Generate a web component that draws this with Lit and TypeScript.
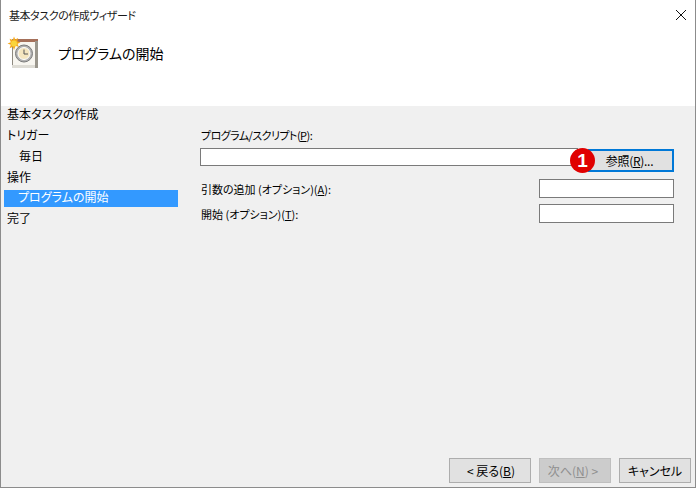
import { LitElement, html, css } from "lit";
import { customElement } from "lit/decorators.js";

@customElement("app-root")
export class AppRoot extends LitElement {
  static styles = css`
    :host {
      display: block;
      width: 696px;
      height: 488px;
      font-family: "Noto Sans CJK JP", "Noto Sans", sans-serif;
      font-size: 12px;
      font-feature-settings: "palt";
      color: #000;
    }
    .win {
      box-sizing: border-box;
      width: 696px;
      height: 488px;
      display: flex;
      flex-direction: column;
      background: #f0f0f0;
      border: 1px solid #8c8c8c;
      border-top: none;
      overflow: hidden;
    }
    .head {
      height: 106px;
      background: #fff;
      flex: none;
      display: flex;
      flex-direction: column;
    }
    .titlebar {
      height: 30px;
      display: flex;
      align-items: center;
      justify-content: space-between;
      padding: 0 9px 0 8px;
      color: #1a1a1a;
      line-height: 30px;
      font-size: 11px;
      letter-spacing: -0.45px;
    }
    .close { display: block; }
    .heading {
      display: flex;
      align-items: flex-start;
      gap: 17px;
      padding: 6px 0 0 6px;
    }
    .heading svg { display: block; flex: none; }
    .heading span {
      font-size: 14px;
      line-height: 24px;
      margin-top: 5px;
    }
    .main {
      flex: 1;
      display: flex;
      min-height: 0;
    }
    .side {
      width: 177px;
      flex: none;
      padding: 0 0 0 3px;
      margin-top: -2px;
      box-sizing: border-box;
    }
    .side-row {
      height: 21px;
      line-height: 19px;
      padding-left: 3px;
    }
    .side-row.sub { padding-left: 15px; }
    .side-row.cur {
      height: 17px;
      line-height: 14px;
      margin: 2px 0 1px;
      padding-left: 14px;
      background: #3399ff;
      color: #fff;
    }
    .form {
      width: 474px;
      margin-left: 22px;
      padding-top: 21px;
      box-sizing: border-box;
      position: relative;
    }
    .lbl {
      font-size: 11px;
      line-height: 16px;
      padding-left: 1px;
      height: 21px;
    }
    .lbl.tight { letter-spacing: -0.55px; }
    .prog {
      display: flex;
      align-items: flex-start;
      justify-content: space-between;
    }
    .field {
      box-sizing: border-box;
      background: #fff;
      border: 1px solid #7a7a7a;
    }
    .prog .field { width: 378px; height: 18px; }
    .browse {
      box-sizing: border-box;
      width: 86px;
      height: 23px;
      margin-top: 1px;
      background: #e1e1e1;
      border: 2px solid #0078d7;
      font: inherit;
      font-size: 12px;
      letter-spacing: -0.3px;
      line-height: 17px;
      padding: 0 3px 0 0;
      text-align: center;
      color: #000;
    }
    u { text-underline-offset: 1px; }
    .opt {
      display: flex;
      justify-content: space-between;
      align-items: center;
      height: 19px;
      margin-bottom: 6px;
    }
    .opts { padding-top: 7px; }
    .opt .field { width: 135px; height: 19px; }
    .opt .lbl { height: 16px; }
    .badge {
      position: absolute;
      left: 370px;
      top: 42px;
      width: 25px;
      height: 25px;
      border-radius: 50%;
      background: #e00000;
      color: #fff;
      font-family: "Liberation Sans", sans-serif;
      font-weight: 700;
      font-size: 19px;
      line-height: 25px;
      text-align: center;
    }
    .foot {
      flex: none;
      display: flex;
      justify-content: flex-end;
      gap: 8px;
      padding: 0 4px 4px 0;
      height: 25px;
    }
    .btn {
      box-sizing: border-box;
      width: 72px;
      height: 25px;
      background: #e1e1e1;
      border: 1px solid #adadad;
      font: inherit;
      font-size: 12px;
      line-height: 21px;
      padding: 0;
      text-align: center;
      color: #000;
    }
    .btn.back { width: 82px; padding-left: 2px; }
    .btn.off {
      background: #cccccc;
      border-color: #bfbfbf;
      color: #8f8f8f;
      padding-right: 4px;
    }
  `;

  render() {
    return html`
      <div class="win">
        <div class="head">
          <div class="titlebar">
            <span>基本タスクの作成ウィザード</span>
            <svg class="close" width="10" height="10" viewBox="0 0 10 10">
              <path d="M0 0L10 10M10 0L0 10" stroke="#111" stroke-width="1" fill="none" />
            </svg>
          </div>
          <div class="heading">
            <svg width="34" height="34" viewBox="0 0 34 34">
              <rect x="5" y="3" width="26" height="29" fill="#8f8a80" />
              <rect x="6" y="6" width="22" height="24" fill="#f8f6f0" />
              <rect x="5" y="29" width="24" height="3" fill="#dedcd5" />
              <rect x="8" y="3" width="23" height="3" fill="#a5705a" />
              <rect x="28" y="5" width="3" height="27" fill="#9a968c" />
              <circle cx="17" cy="17.500" r="8.500" fill="#b0b0b0" stroke="#7b7b7b" stroke-width="1" />
              <circle cx="17" cy="17.500" r="6" fill="#f5e6c0" stroke="#fff" stroke-width="1" />
              <path d="M17 13.500V18H21" fill="none" stroke="#555" stroke-width="1" />
              <path d="M7 0.500l1.200 3 3-1.500-1 3.200 3.300 1.300-3 1.300 1.300 3.200-3.200-1.300L7 14l-1.200-3.300-3.200 1.500 1.200-3.400L0.500 7.500l3.300-1.200L2.600 2.800l3.200 1.300z" fill="#f5a81c" />
              <circle cx="7" cy="7.500" r="3" fill="#fad53c" />
            </svg>
            <span>プログラムの開始</span>
          </div>
        </div>
        <div class="main">
          <div class="side">
            <div class="side-row">基本タスクの作成</div>
            <div class="side-row">トリガー</div>
            <div class="side-row sub">毎日</div>
            <div class="side-row">操作</div>
            <div class="side-row sub cur">プログラムの開始</div>
            <div class="side-row">完了</div>
          </div>
          <div class="form">
            <div class="lbl tight">プログラム/スクリプト(<u>P</u>):</div>
            <div class="prog">
              <div class="field"></div>
              <button class="browse">参照(<u>R</u>)...</button>
            </div>
            <div class="opts">
              <div class="opt">
                <div class="lbl">引数の追加 (オプション)(<u>A</u>):</div>
                <div class="field"></div>
              </div>
              <div class="opt">
                <div class="lbl">開始 (オプション)(<u>T</u>):</div>
                <div class="field"></div>
              </div>
            </div>
            <div class="badge">1</div>
          </div>
        </div>
        <div class="foot">
          <button class="btn back">&lt; 戻る(<u>B</u>)</button>
          <button class="btn off">次へ(<u>N</u>) &gt;</button>
          <button class="btn">キャンセル</button>
        </div>
      </div>
    `;
  }
}
